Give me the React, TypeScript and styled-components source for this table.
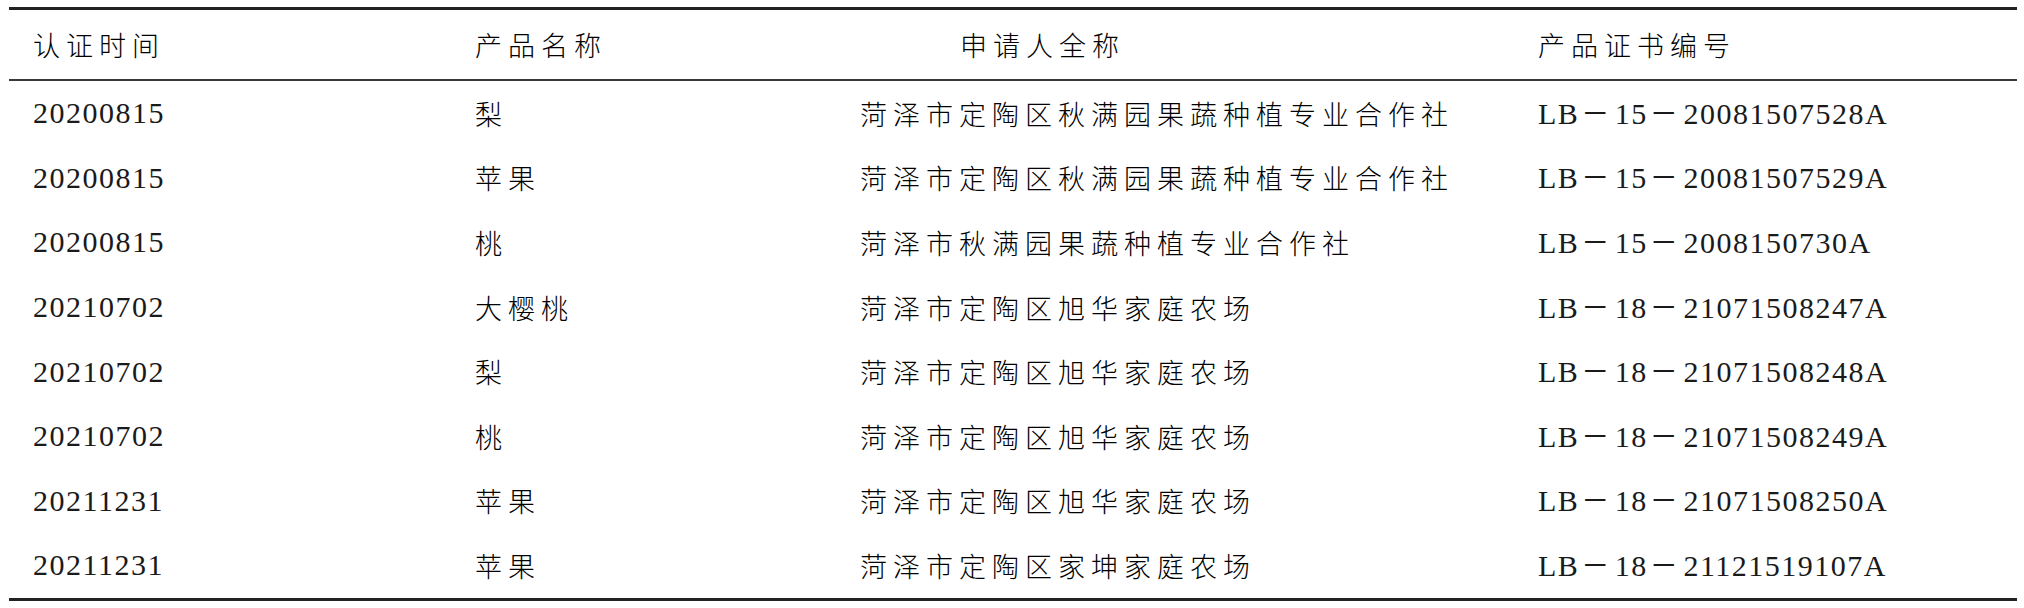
import styled, { createGlobalStyle } from 'styled-components'

const GlobalStyle = createGlobalStyle`
  html, body {
    margin: 0;
    padding: 0;
    background: #ffffff;
  }
`

type Row = {
  date: string
  product: string
  applicant: string
  cert: string
}

const rows: Row[] = [
  { date: '20200815', product: '梨', applicant: '菏泽市定陶区秋满园果蔬种植专业合作社', cert: 'LB－15－20081507528A' },
  { date: '20200815', product: '苹果', applicant: '菏泽市定陶区秋满园果蔬种植专业合作社', cert: 'LB－15－20081507529A' },
  { date: '20200815', product: '桃', applicant: '菏泽市秋满园果蔬种植专业合作社', cert: 'LB－15－2008150730A' },
  { date: '20210702', product: '大樱桃', applicant: '菏泽市定陶区旭华家庭农场', cert: 'LB－18－21071508247A' },
  { date: '20210702', product: '梨', applicant: '菏泽市定陶区旭华家庭农场', cert: 'LB－18－21071508248A' },
  { date: '20210702', product: '桃', applicant: '菏泽市定陶区旭华家庭农场', cert: 'LB－18－21071508249A' },
  { date: '20211231', product: '苹果', applicant: '菏泽市定陶区旭华家庭农场', cert: 'LB－18－21071508250A' },
  { date: '20211231', product: '苹果', applicant: '菏泽市定陶区家坤家庭农场', cert: 'LB－18－21121519107A' },
]

// full-width dashes get a little extra room, as in the printed table
function CertCode({ code }: { code: string }): JSX.Element {
  const parts = code.split('－')
  return (
    <>
      {parts.map((part, i) => (
        <span key={i}>
          {i > 0 && <Dash>－</Dash>}
          {part}
        </span>
      ))}
    </>
  )
}

export default function App(): JSX.Element {
  return (
    <>
      <GlobalStyle />
      <Page>
        <Table>
          <HeaderRow>
            <Cell>认证时间</Cell>
            <Cell>产品名称</Cell>
            <Cell $indent={100}>申请人全称</Cell>
            <Cell>产品证书编号</Cell>
          </HeaderRow>
          {rows.map((row, i) => (
            <BodyRow key={i}>
              <NumberCell>{row.date}</NumberCell>
              <Cell>{row.product}</Cell>
              <Cell>{row.applicant}</Cell>
              <NumberCell>
                <CertCode code={row.cert} />
              </NumberCell>
            </BodyRow>
          ))}
        </Table>
      </Page>
    </>
  )
}

const Page = styled.div`
  padding: 7px 7px 0 9px;
`

const Table = styled.div`
  width: 2008px;
  border-top: 3px solid #222222;
  border-bottom: 3px solid #222222;
`

const RowBase = styled.div`
  display: grid;
  grid-template-columns: 442px 385px 678px 1fr;
  align-items: center;
`

const HeaderRow = styled(RowBase)`
  height: 69px;
  border-bottom: 2px solid #3a3a3a;
`

const BodyRow = styled(RowBase)`
  height: 64.6px;
`

const Cell = styled.div<{ $indent?: number }>`
  padding-left: ${(p) => 24 + (p.$indent ?? 0)}px;
  font-family: 'Noto Sans CJK SC', sans-serif;
  font-size: 27px;
  font-weight: 300;
  letter-spacing: 6px;
  color: #000000;
  white-space: nowrap;
  line-height: 1;
`

const NumberCell = styled.div`
  padding-left: 24px;
  font-family: 'Liberation Serif', 'Noto Sans CJK SC', serif;
  font-size: 30px;
  letter-spacing: 1.5px;
  color: #1a1a1a;
  white-space: nowrap;
  line-height: 1;
`

const Dash = styled.span`
  font-family: 'Noto Sans CJK SC', sans-serif;
  font-size: 28px;
  margin: 0 4px 0 2px;
`
